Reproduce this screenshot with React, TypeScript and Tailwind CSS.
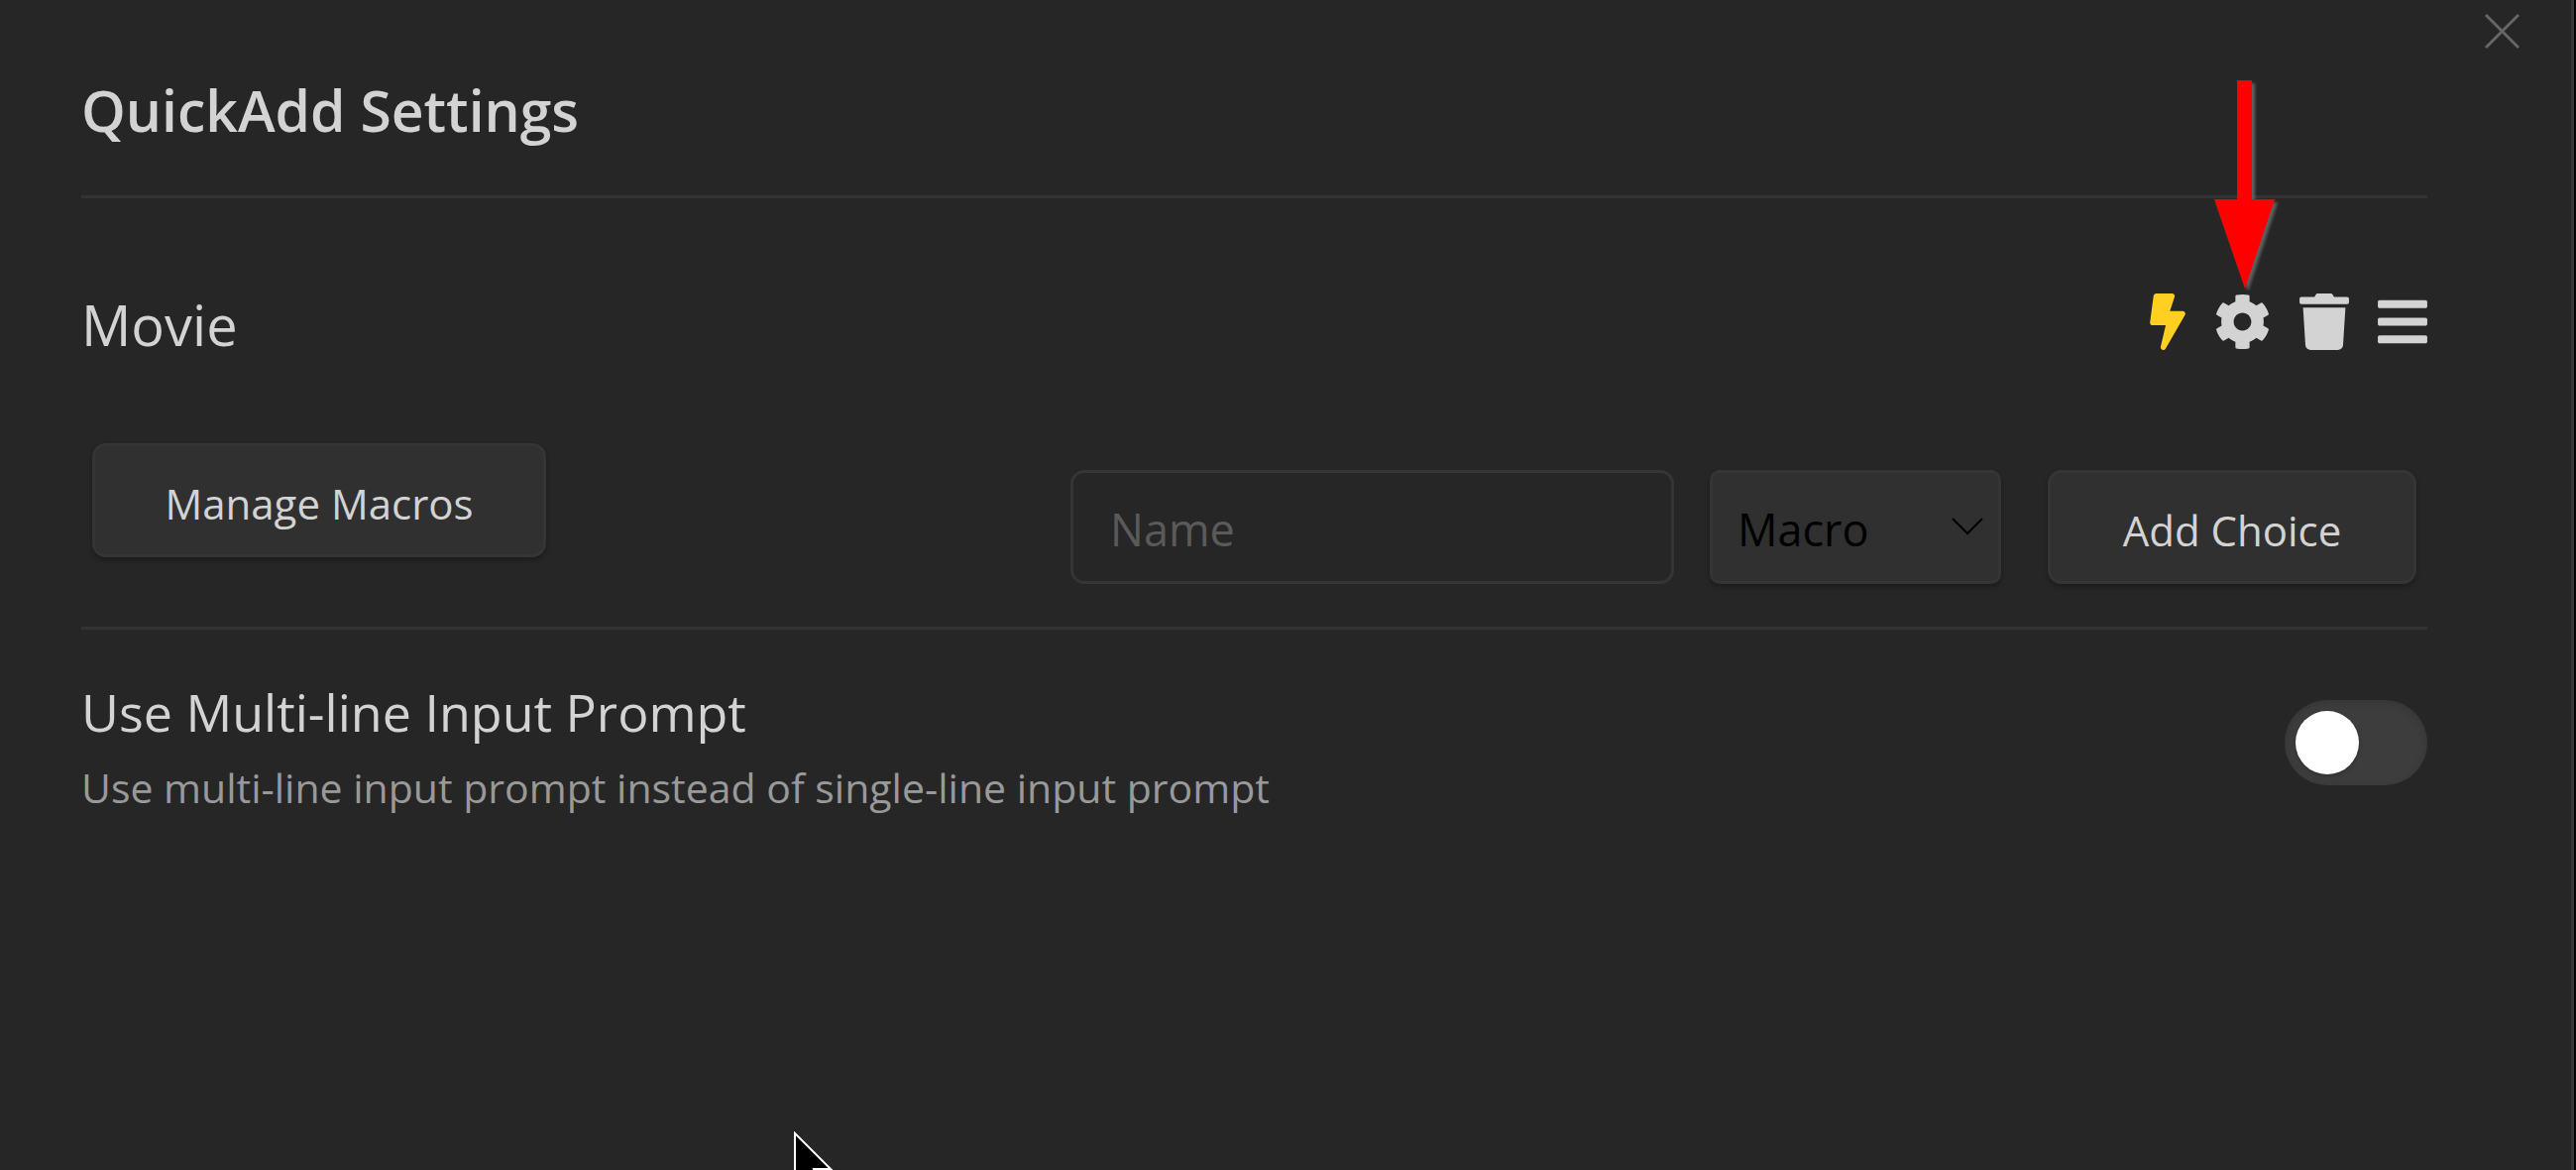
import { useState } from "react";
import { FaBars, FaBolt, FaCog, FaTrash } from "react-icons/fa";

const control =
  "h-[115px] border-[3px] border-[#353535] bg-[#303030] shadow-[0_3px_5px_rgba(0,0,0,0.28)]";

function PointerArrow() {
  return (
    <svg
      className="pointer-events-none absolute right-[-11px] bottom-full mb-[3px] h-[212px] w-[68px]"
      viewBox="0 0 68 212"
      aria-hidden="true"
    >
      <defs>
        <filter id="arrow-shadow" x="-20%" y="-10%" width="150%" height="120%">
          <feGaussianBlur stdDeviation="1.5" />
        </filter>
      </defs>
      <path
        d="M23 0H38V120H61L31 210L0 120H23Z"
        transform="translate(3 3)"
        fill="#606060"
        filter="url(#arrow-shadow)"
      />
      <path d="M23 0H38V120H61L31 210L0 120H23Z" fill="#ff0000" />
    </svg>
  );
}

function ChoiceRow() {
  return (
    <div className="mt-[64px] flex items-center justify-between">
      <span className="text-[56px] leading-[126px]">Movie</span>
      <div className="mb-[5px] flex items-center gap-[29px] text-[57px]">
        <button type="button" aria-label="Toggle command" className="text-[#ffd021]">
          <FaBolt className="h-[57px] w-[36px]" />
        </button>
        <button type="button" aria-label="Configure" className="relative">
          <FaCog />
          <PointerArrow />
        </button>
        <button type="button" aria-label="Delete">
          <FaTrash className="h-[57px] w-[50px]" />
        </button>
        <button type="button" aria-label="Drag to reorder">
          <FaBars className="h-[57px] w-[50px]" />
        </button>
      </div>
    </div>
  );
}

function AddChoiceForm() {
  return (
    <div className="mt-[57px] flex items-start justify-between px-[11px] pb-[43px]">
      <button type="button" className={`${control} w-[458px] rounded-[14px] pt-[5px] text-[42px]`}>
        Manage Macros
      </button>
      <form className="mt-[27px] flex" onSubmit={(e) => e.preventDefault()}>
        <input
          type="text"
          aria-label="Name"
          placeholder="Name"
          className="h-[115px] w-[609px] rounded-[14px] border-[3px] border-[#353535] bg-transparent px-[37px] pt-[4px] text-[45px] outline-none placeholder:text-[#5a5a5a]"
        />
        <div className="relative ml-[36px]">
          <select
            aria-label="Choice type"
            className={`${control} w-[294px] appearance-none rounded-[10px] px-[25px] pt-[4px] text-[45px] text-black outline-none`}
          >
            <option>Macro</option>
            <option>Template</option>
            <option>Capture</option>
            <option>Multi</option>
          </select>
          <svg
            className="pointer-events-none absolute top-[48px] right-[18px] h-[18px] w-[32px]"
            viewBox="0 0 32 18"
            fill="none"
            stroke="#000"
            strokeWidth="2"
            aria-hidden="true"
          >
            <path d="M1 1L16 16L31 1" />
          </svg>
        </div>
        <button
          type="submit"
          className={`${control} ml-[47px] w-[372px] rounded-[14px] pt-[5px] text-[42px]`}
        >
          Add Choice
        </button>
      </form>
    </div>
  );
}

function MultiLineSetting() {
  const [on, setOn] = useState(false);
  return (
    <div className="flex items-center justify-between pt-[44px]">
      <div>
        <label htmlFor="multi-line" className="block text-[52px] leading-[77px]">
          Use Multi-line Input Prompt
        </label>
        <p id="multi-line-help" className="text-[41px] leading-[77px] text-[#999999]">
          Use multi-line input prompt instead of single-line input prompt
        </p>
      </div>
      <span className="relative mb-[14px] h-[86px] w-[144px] shrink-0">
        <input
          id="multi-line"
          type="checkbox"
          role="switch"
          aria-describedby="multi-line-help"
          checked={on}
          onChange={(e) => setOn(e.target.checked)}
          className="peer block h-full w-full appearance-none rounded-full bg-[#3d3d3d] shadow-[inset_0_2px_8px_rgba(0,0,0,0.15)] checked:bg-[#7f6df2]"
        />
        <span className="pointer-events-none absolute top-[11px] left-[11px] size-[64px] rounded-full bg-white shadow-[0_2px_4px_rgba(0,0,0,0.2)] peer-checked:left-[69px]" />
      </span>
    </div>
  );
}

export default function App() {
  return (
    <div className="min-h-screen bg-black pr-[2px] font-['Open_Sans','Noto_Sans',sans-serif] text-[#d3d3d3]">
      <main className="relative min-h-screen overflow-hidden border-r-[3px] border-[#363636] bg-[#262626] pr-[145px] pl-[82px]">
        <button
          type="button"
          aria-label="Close"
          className="absolute top-[13px] right-[51px] size-[37px] text-[#666666]"
        >
          <svg viewBox="0 0 37 37" fill="none" stroke="currentColor" strokeWidth="3" aria-hidden="true">
            <path d="M2 2L35 35M35 2L2 35" />
          </svg>
        </button>
        <h1 className="pt-[67px] text-[57px] leading-[88px] font-semibold">QuickAdd Settings</h1>
        <div className="mt-[42px] border-y-[3px] border-[#333333]">
          <ChoiceRow />
          <AddChoiceForm />
        </div>
        <MultiLineSetting />
        <svg
          className="pointer-events-none absolute bottom-[-22px] left-[801px] h-[61px] w-[40px]"
          viewBox="0 0 40 61"
          fill="#000"
          stroke="#fff"
          strokeWidth="2"
          aria-hidden="true"
        >
          <path d="M1 2V54L13 43L20 59L28 55L20 38H37Z" />
        </svg>
      </main>
    </div>
  );
}
